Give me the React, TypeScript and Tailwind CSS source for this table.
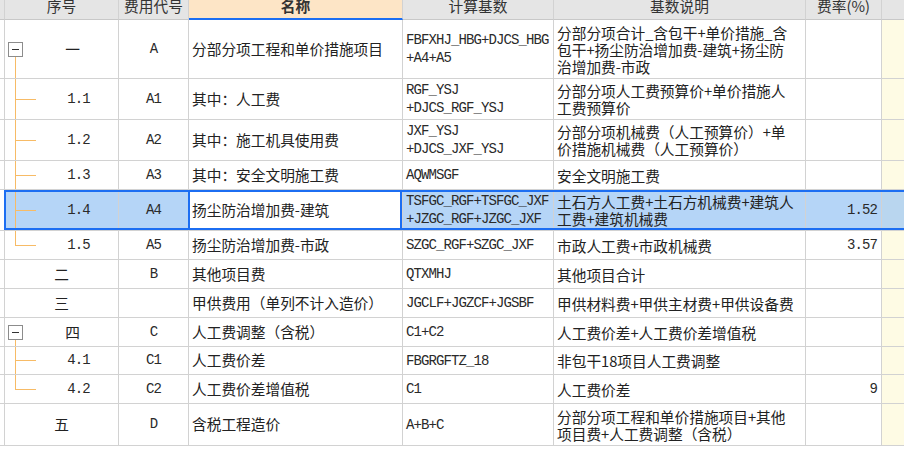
import React from "react";

type Kind = "parent" | "child" | "last" | "none";
interface RowData {
  seq: string;
  kind: Kind;
  code: string;
  name: string;
  base: string[];
  desc: string[];
  rate: string;
  h: string;
  selected?: boolean;
}

const rows: RowData[] = [
  {
    seq: "一",
    kind: "parent",
    code: "A",
    name: "分部分项工程和单价措施项目",
    base: ["FBFXHJ_HBG+DJCS_HBG", "+A4+A5"],
    desc: ["分部分项合计_含包干+单价措施_含", "包干+扬尘防治增加费-建筑+扬尘防", "治增加费-市政"],
    rate: "",
    h: "h-[59px]",
  },
  {
    seq: "1.1",
    kind: "child",
    code: "A1",
    name: "其中：人工费",
    base: ["RGF_YSJ", "+DJCS_RGF_YSJ"],
    desc: ["分部分项人工费预算价+单价措施人", "工费预算价"],
    rate: "",
    h: "h-[41px]",
  },
  {
    seq: "1.2",
    kind: "child",
    code: "A2",
    name: "其中：施工机具使用费",
    base: ["JXF_YSJ", "+DJCS_JXF_YSJ"],
    desc: ["分部分项机械费（人工预算价）+单", "价措施机械费（人工预算价）"],
    rate: "",
    h: "h-[41px]",
  },
  {
    seq: "1.3",
    kind: "child",
    code: "A3",
    name: "其中：安全文明施工费",
    base: ["AQWMSGF"],
    desc: ["安全文明施工费"],
    rate: "",
    h: "h-[29px]",
  },
  {
    seq: "1.4",
    kind: "child",
    code: "A4",
    name: "扬尘防治增加费-建筑",
    base: ["TSFGC_RGF+TSFGC_JXF", "+JZGC_RGF+JZGC_JXF"],
    desc: ["土石方人工费+土石方机械费+建筑人", "工费+建筑机械费"],
    rate: "1.52",
    h: "h-[41px]",
    selected: true,
  },
  {
    seq: "1.5",
    kind: "last",
    code: "A5",
    name: "扬尘防治增加费-市政",
    base: ["SZGC_RGF+SZGC_JXF"],
    desc: ["市政人工费+市政机械费"],
    rate: "3.57",
    h: "h-[29px]",
  },
  {
    seq: "二",
    kind: "none",
    code: "B",
    name: "其他项目费",
    base: ["QTXMHJ"],
    desc: ["其他项目合计"],
    rate: "",
    h: "h-[29px]",
  },
  {
    seq: "三",
    kind: "none",
    code: "",
    name: "甲供费用（单列不计入造价）",
    base: ["JGCLF+JGZCF+JGSBF"],
    desc: ["甲供材料费+甲供主材费+甲供设备费"],
    rate: "",
    h: "h-[29px]",
  },
  {
    seq: "四",
    kind: "parent",
    code: "C",
    name: "人工费调整（含税）",
    base: ["C1+C2"],
    desc: ["人工费价差+人工费价差增值税"],
    rate: "",
    h: "h-[29px]",
  },
  {
    seq: "4.1",
    kind: "child",
    code: "C1",
    name: "人工费价差",
    base: ["FBGRGFTZ_18"],
    desc: ["非包干18项目人工费调整"],
    rate: "",
    h: "h-[28px]",
  },
  {
    seq: "4.2",
    kind: "last",
    code: "C2",
    name: "人工费价差增值税",
    base: ["C1"],
    desc: ["人工费价差"],
    rate: "9",
    h: "h-[29px]",
  },
  {
    seq: "五",
    kind: "none",
    code: "D",
    name: "含税工程造价",
    base: ["A+B+C"],
    desc: ["分部分项工程和单价措施项目+其他", "项目费+人工费调整（含税）"],
    rate: "",
    h: "h-[42px]",
  },
];

const CJK = "font-['Noto_Sans_CJK_SC',sans-serif] text-[14.7px] text-[#222]";
const MONO = "font-['Liberation_Mono',monospace] text-[14px] tracking-[-0.9px] text-[#2a2a2a]";
const LINE = "border-[#d2d2d2]";
const TREE = "border-[#f7bb66]";

function SeqCell({ r, bg }: { r: RowData; bg: string }) {
  const base = `flex h-full w-[114px] shrink-0 border-r ${LINE} ${bg}`;
  if (r.kind === "parent") {
    return (
      <div className={`${base} pl-[3px]`}>
        <div className="flex w-[15px] flex-col">
          <div className="flex-1" />
          <div className="flex h-[15px] w-[15px] items-center justify-center border border-[#8c8c8c] bg-white">
            <div className="h-px w-[7px] bg-[#333]" />
          </div>
          <div className={`ml-[7px] flex-1 border-l ${TREE}`} />
        </div>
        <div className={`ml-[4px] flex flex-1 items-center justify-center ${CJK}`}>{r.seq}</div>
      </div>
    );
  }
  if (r.kind === "child" || r.kind === "last") {
    return (
      <div className={base}>
        <div className="w-[10px]" />
        <div className="flex w-[21px] flex-col">
          <div className={`flex-1 border-b border-l ${TREE}`} />
          <div className={r.kind === "last" ? "flex-1" : `flex-1 border-l ${TREE}`} />
        </div>
        <div className={`flex flex-1 items-center justify-center pl-[3px] ${MONO}`}>{r.seq}</div>
      </div>
    );
  }
  return <div className={`${base} items-center justify-center ${CJK}`}>{r.seq}</div>;
}

function Row({ r }: { r: RowData }) {
  const sel = !!r.selected;
  const bg = sel ? "bg-[#b5d5f7]" : "";
  return (
    <div className={`relative flex border-b ${LINE} ${r.h}`}>
      <div className={`h-full w-[5px] shrink-0 border-r ${LINE}`} />
      <SeqCell r={r} bg={bg} />
      <div className={`flex h-full w-[70px] shrink-0 items-center justify-center border-r ${LINE} ${bg} ${MONO}`}>
        {r.code}
      </div>
      <div className={`relative flex h-full w-[214px] shrink-0 items-center border-r pl-[3px] ${LINE} bg-white ${CJK} whitespace-nowrap`}>
        {r.name}
        {sel && <div className="pointer-events-none absolute -left-px right-0 top-0 bottom-0 border-2 border-[#1c6ef2]" />}
      </div>
      <div className={`flex h-full w-[151px] shrink-0 flex-col justify-center border-r pl-[3px] ${LINE} ${bg} ${MONO} leading-[18px] whitespace-nowrap`}>
        {r.base.map((l, i) => (
          <div key={i}>{l}</div>
        ))}
      </div>
      <div className={`flex h-full w-[252px] shrink-0 flex-col justify-center border-r pl-[3px] ${LINE} ${bg} ${CJK} leading-[17px] whitespace-nowrap`}>
        {r.desc.map((l, i) => (
          <div key={i}>{l}</div>
        ))}
      </div>
      <div className={`flex h-full w-[76px] shrink-0 items-center justify-end border-r pr-[4px] ${LINE} ${bg} ${MONO}`}>
        {r.rate}
      </div>
      <div className={`h-full flex-1 ${sel ? "bg-[#b9d6ef]" : "bg-[#fefbe4]"}`} />
      {sel && (
        <div className="pointer-events-none absolute left-[4px] right-0 top-0 bottom-0 border-y-2 border-l-2 border-[#1c6ef2]" />
      )}
    </div>
  );
}

function HeadCell({ w, label, name }: { w: string; label: string; name?: boolean }) {
  return (
    <div
      className={`flex h-full ${w} shrink-0 items-start justify-center overflow-hidden border-r ${LINE} ${
        name ? "border-b-2 border-b-[#1c6ef2] bg-[#fde5c6] font-bold" : "border-b border-b-[#c8c8c8] bg-[#e5e5e5]"
      }`}
    >
      <span className="-mt-[2px] font-['Noto_Sans_CJK_SC',sans-serif] text-[14.7px] leading-[15px] text-[#333] whitespace-nowrap">
        {label}
      </span>
    </div>
  );
}

export default function App() {
  return (
    <div className="h-[454px] w-[904px] overflow-hidden bg-white">
      <div className="flex h-[20px]">
        <div className={`h-full w-[5px] shrink-0 border-r border-b border-b-[#c8c8c8] ${LINE} bg-[#e5e5e5]`} />
        <HeadCell w="w-[114px]" label="序号" />
        <HeadCell w="w-[70px]" label="费用代号" />
        <HeadCell w="w-[214px]" label="名称" name />
        <HeadCell w="w-[151px]" label="计算基数" />
        <HeadCell w="w-[252px]" label="基数说明" />
        <HeadCell w="w-[76px]" label="费率(%)" />
        <div className="h-full flex-1 border-b border-b-[#c8c8c8] bg-[#e5e5e5]" />
      </div>
      {rows.map((r, i) => (
        <Row key={i} r={r} />
      ))}
    </div>
  );
}
